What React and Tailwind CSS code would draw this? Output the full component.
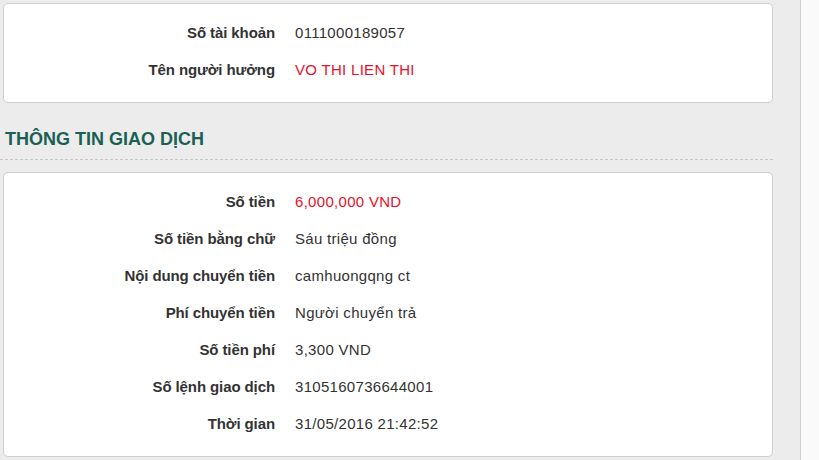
import React from "react";

const account = [
  { label: "Số tài khoản", value: "0111000189057" },
  { label: "Tên người hưởng", value: "VO THI LIEN THI", red: true },
];

const transaction = [
  { label: "Số tiền", value: "6,000,000 VND", red: true },
  { label: "Số tiền bằng chữ", value: "Sáu triệu đồng" },
  { label: "Nội dung chuyển tiền", value: "camhuongqng ct" },
  { label: "Phí chuyển tiền", value: "Người chuyển trả" },
  { label: "Số tiền phí", value: "3,300 VND" },
  { label: "Số lệnh giao dịch", value: "3105160736644001" },
  { label: "Thời gian", value: "31/05/2016 21:42:52" },
];

function InfoRow({ label, value, red }) {
  return (
    <div className="flex items-center h-[37px]">
      <span className="w-[271px] shrink-0 text-right font-bold text-[#333] tracking-[-0.1px]">{label}</span>
      <span className={`pl-[20px] tracking-[0.3px] ${red ? "text-[#e8102a]" : "text-[#333]"}`}>{value}</span>
    </div>
  );
}

function InfoCard({ rows }) {
  return (
    <div className="bg-white border border-[#cfcfcf] rounded-[5px] pt-[10px] pb-[14px]">
      {rows.map((r) => (
        <InfoRow key={r.label} {...r} />
      ))}
    </div>
  );
}

export default function App() {
  return (
    <div
      className="flex w-[819px] h-[460px] overflow-hidden bg-[#fafafa] text-[15px] leading-none"
      style={{ fontFamily: '"Liberation Sans", Arial, sans-serif' }}
    >
      <div className="w-[801px] shrink-0 bg-[#ececec] border-r border-[#cfcfcf] pl-[3px] pr-[27px] pt-[3px]">
        {/* Account */}
        <InfoCard rows={account} />

        {/* Transaction heading */}
        <div className="mt-[27px] -ml-[3px] border-b border-dashed border-[#c8c8c8] pb-[11px] pl-[5px]">
          <h2 className="text-[18px] font-bold text-[#1a6054] leading-none">THÔNG TIN GIAO DỊCH</h2>
        </div>

        {/* Transaction details */}
        <div className="mt-[12px]">
          <InfoCard rows={transaction} />
        </div>
      </div>
    </div>
  );
}
